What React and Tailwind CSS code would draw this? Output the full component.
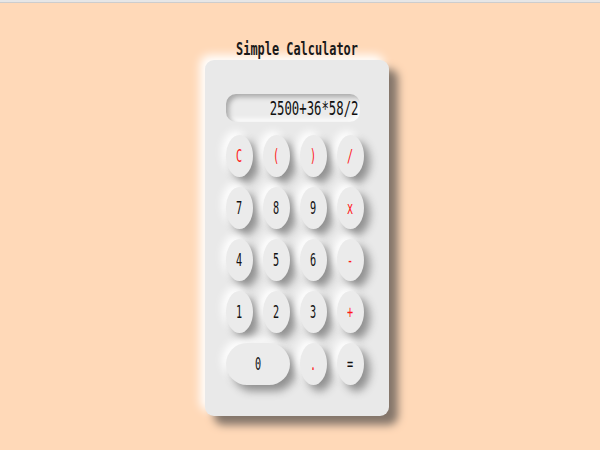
const keys = [
  { label: "C", red: true },
  { label: "(", red: true },
  { label: ")", red: true },
  { label: "/", red: true },
  { label: "7" },
  { label: "8" },
  { label: "9" },
  { label: "x", red: true },
  { label: "4" },
  { label: "5" },
  { label: "6" },
  { label: "-", red: true },
  { label: "1" },
  { label: "2" },
  { label: "3" },
  { label: "+", red: true },
  { label: "0", wide: true },
  { label: ".", red: true },
  { label: "=" },
];

function Key({ label, red, wide }) {
  return (
    <button
      className={
        "h-[42px] bg-[#ebebeb] flex items-center justify-center text-[17px] leading-none shadow-[6px_6px_9px_#909090,-4px_-4px_8px_#ffffff] " +
        (wide ? "col-span-2 rounded-[21px]" : "rounded-[50%]") +
        (red ? " text-[#ff1a1a]" : " text-[#111]")
      }
    >
      <span className="inline-block scale-x-[0.6]">{label}</span>
    </button>
  );
}

export default function App() {
  return (
    <div
      className="min-h-screen bg-[#ffd9b8]"
      style={{ fontFamily: '"DejaVu Sans Mono", monospace' }}
    >
      <div className="h-[3px] bg-[#e6e6e6] border-b border-[#cdcdcd]" />
      <div className="flex flex-col items-center pt-[36px] pr-[6px]">
        <h1 className="text-[17px] font-bold leading-[20px] text-[#1a1a1a]">
          <span className="inline-block scale-x-[0.7]">Simple Calculator</span>
        </h1>
        <div className="mt-[1px] w-[184px] h-[356px] rounded-[9px] bg-[#e9e9e9] px-[21px] pt-[34px] shadow-[9px_9px_8px_#84756a,-5px_-5px_10px_#ffffff]">
          <div className="h-[28px] w-[134px] rounded-[10px] bg-[#ebebeb] flex items-center justify-end pr-[2px] shadow-[inset_3px_3px_5px_#a9a9a9,inset_-3px_-3px_5px_#ffffff]">
            <span className="inline-block origin-right scale-x-[0.615] text-[20px] leading-none text-[#111] whitespace-nowrap">
              2500+36*58/2
            </span>
          </div>
          <div className="mt-[13px] grid grid-cols-[27px_27px_27px_27px] gap-x-[10px] gap-y-[10px]">
            {keys.map((k) => (
              <Key key={k.label} {...k} />
            ))}
          </div>
        </div>
      </div>
    </div>
  );
}
